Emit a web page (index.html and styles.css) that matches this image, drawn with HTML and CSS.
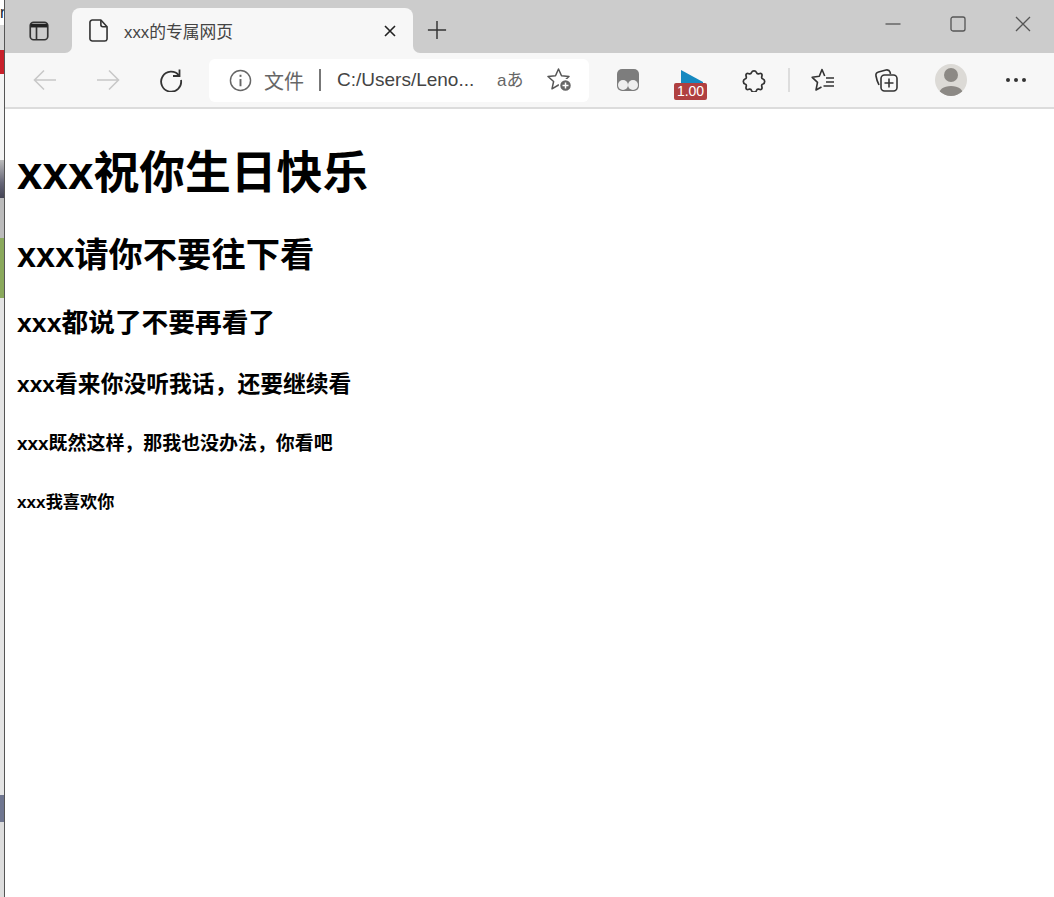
FILE: index.html
```html
<!DOCTYPE html>
<html lang="zh-CN">
<head>
  <meta charset="UTF-8">
  <title>xxx的专属网页</title>
  <link rel="stylesheet" href="styles.css">
</head>
<body>
  <div class="desktop">
    <!-- 后面窗口露出的一条 -->
    <div class="behind">
      <div class="behind-text">r</div>
      <div class="behind-gap1"></div>
      <div class="behind-red"></div>
      <div class="behind-gap2"></div>
      <div class="behind-dark"></div>
      <div class="behind-gap3"></div>
      <div class="behind-green"></div>
      <div class="behind-gap4"></div>
      <div class="behind-blue"></div>
      <div class="behind-gap5"></div>
    </div>

    <div class="window">
      <div class="tabbar">
        <div class="tabbar-left">
          <svg class="icon" viewBox="0 0 24 24" fill="none" stroke="#333" stroke-width="2">
            <rect x="1.500" y="1.500" width="21" height="21" rx="4"/>
            <path d="M2 5.500h20" stroke-width="4.500" stroke="#222"/>
            <path d="M9 7v15"/>
          </svg>
        </div>
        <div class="tab-wrap">
          <div class="tab">
            <svg class="icon tab-file" viewBox="0 0 20 24" fill="none" stroke="#333" stroke-width="1.700" stroke-linejoin="round">
              <path d="M4 1h8.500L19 8v13a2.500 2.500 0 0 1-2.500 2H4a2.500 2.500 0 0 1-3-2.500V3.500A2.500 2.500 0 0 1 4 1z"/>
              <path d="M12.500 1v5a2 2 0 0 0 2 2H19"/>
            </svg>
            <span class="tab-title">xxx的专属网页</span>
            <svg class="tab-close" viewBox="0 0 14 14" fill="none" stroke="#222" stroke-width="1.600">
              <path d="M2 2l10 10M12 2L2 12"/>
            </svg>
          </div>
        </div>
        <div class="tabbar-right">
          <svg class="new-tab" viewBox="0 0 22 22" fill="none" stroke="#333" stroke-width="1.600">
            <path d="M11 1v20M1 11h20"/>
          </svg>
          <div class="win-controls">
            <svg class="win-btn" viewBox="0 0 16 16" fill="none" stroke="#555" stroke-width="1.300"><path d="M0.500 8h15"/></svg>
            <svg class="win-btn" viewBox="0 0 16 16" fill="none" stroke="#555" stroke-width="1.300"><rect x="1" y="1" width="14" height="14" rx="2"/></svg>
            <svg class="win-btn" viewBox="0 0 16 16" fill="none" stroke="#555" stroke-width="1.300"><path d="M1 1l14 14M15 1L1 15"/></svg>
          </div>
        </div>
      </div>

      <div class="toolbar">
        <div class="btn">
          <svg class="icon" viewBox="0 0 24 24" fill="none" stroke="#c8c8c8" stroke-width="1.600"><path d="M23 12H1.500M11 2.500L1.500 12l9.500 9.500"/></svg>
        </div>
        <div class="btn">
          <svg class="icon" viewBox="0 0 24 24" fill="none" stroke="#c8c8c8" stroke-width="1.600"><path d="M1 12h21.500M13 2.500l9.500 9.500-9.500 9.500"/></svg>
        </div>
        <div class="btn">
          <svg class="icon" viewBox="0 0 24 24" fill="none" stroke="#333" stroke-width="1.800"><path d="M20 7.500A10 10 0 1 0 22 12"/><path d="M20.500 1.500V8H14"/></svg>
        </div>

        <div class="address">
          <svg class="addr-info" viewBox="0 0 24 24" fill="none" stroke="#666" stroke-width="1.500">
            <circle cx="12" cy="12" r="10.500"/>
            <path d="M12 10.500V18" stroke-width="2"/>
            <path d="M12 6v2.200" stroke-width="2"/>
          </svg>
          <span class="addr-label">文件</span>
          <span class="addr-sep"></span>
          <span class="addr-url">C:/Users/Leno...</span>
          <span class="addr-read">aあ</span>
          <svg class="addr-star" viewBox="0 0 26 26" fill="none" stroke="#555" stroke-width="1.500" stroke-linejoin="round">
            <path d="M11.500 2l3 6.800 7.500 .7-5.600 5 1.600 7.300-6.500-3.800-6.500 3.800 1.600-7.300L1 9.500l7.500-.7z"/>
            <circle cx="18.500" cy="18.500" r="6" fill="#666" stroke="#fff" stroke-width="1.500"/>
            <path d="M18.500 15.500v6M15.500 18.500h6" stroke="#fff" stroke-width="1.500"/>
          </svg>
        </div>

        <div class="btn btn-first">
          <svg class="icon" viewBox="0 0 24 24">
            <rect x="1" y="1" width="22" height="22" rx="5" fill="#7d7d7d"/>
            <circle cx="7" cy="17" r="5" fill="#eee"/>
            <circle cx="17" cy="17" r="5" fill="#eee"/>
          </svg>
        </div>
        <div class="btn btn-badge">
          <svg class="flag" viewBox="0 0 24 14"><path d="M2 0l22 12v2H2z" fill="#1589c0"/></svg>
          <span class="badge">1.00</span>
        </div>
        <div class="btn">
          <svg class="icon" viewBox="0 0 24 24" fill="none" stroke="#333" stroke-width="1.700" stroke-linejoin="round">
            <path d="M9.500 4.500a2.700 2.700 0 0 1 5 0c.3 1 1 1.500 2 1.300l1.500-.3a1.700 1.700 0 0 1 2 2l-.3 1.500c-.2 1 .3 1.700 1.300 2a2.700 2.700 0 0 1 0 5c-1 .3-1.500 1-1.300 2l.3 1.500a1.700 1.700 0 0 1-2 2l-1.500-.3c-1-.2-1.700.3-2 1.300a2.700 2.700 0 0 1-5 0c-.3-1-1-1.500-2-1.300l-1.500.3a1.700 1.700 0 0 1-2-2l.3-1.500c.2-1-.3-1.700-1.300-2a2.700 2.700 0 0 1 0-5c1-.3 1.500-1 1.300-2l-.3-1.500a1.700 1.700 0 0 1 2-2l1.500.3c1 .2 1.700-.3 2-1.300z"/>
          </svg>
        </div>
        <div class="divider"></div>
        <div class="btn">
          <svg class="icon" viewBox="0 0 24 24" fill="none" stroke="#333" stroke-width="1.600" stroke-linejoin="round">
            <path d="M13.700 8L11 1.500 8.300 8.300 1.200 9.300l5.300 5L5 22l5.500-3"/>
            <path d="M15 10h8M15 14h8M12.500 18H23" stroke-width="1.400"/>
          </svg>
        </div>
        <div class="btn">
          <svg class="icon" viewBox="0 0 24 24" fill="none" stroke="#333" stroke-width="1.600" stroke-linejoin="round">
            <path d="M5 17c-1-2-2.500-6-3-9-.4-2 .5-3.500 2.500-4L12 2c2-.3 3.500.5 4 2l.5 2"/>
            <rect x="7" y="7" width="16" height="16" rx="3.500"/>
            <path d="M15 10.500v9M10.500 15h9"/>
          </svg>
        </div>
        <div class="btn btn-profile">
          <div class="avatar">
            <svg viewBox="0 0 32 32"><circle cx="16" cy="11" r="7" fill="#8c8985"/><path d="M3.500 32c0-6.500 5-10 12.500-10S28.500 25.500 28.500 32z" fill="#8c8985"/></svg>
          </div>
        </div>
        <div class="btn btn-more">
          <span class="dot"></span><span class="dot"></span><span class="dot"></span>
        </div>
      </div>

      <div class="content">
        <h1>xxx祝你生日快乐</h1>
        <h2>xxx请你不要往下看</h2>
        <h3>xxx都说了不要再看了</h3>
        <h4>xxx看来你没听我话，还要继续看</h4>
        <h5>xxx既然这样，那我也没办法，你看吧</h5>
        <h6>xxx我喜欢你</h6>
      </div>
    </div>
  </div>
</body>
</html>
```

FILE: styles.css
```css
* {
  margin: 0;
  padding: 0;
  box-sizing: border-box;
  font-family: "Liberation Sans", "Noto Sans CJK SC", sans-serif;
}

html, body {
  height: 100%;
  overflow: hidden;
  background-color: #fff;
}

.desktop {
  display: flex;
  height: 897px;
}

/* left sliver */
.behind {
  width: 4px;
  display: flex;
  flex-direction: column;
  background-color: #e4e4e4;
}

.behind-text {
  height: 25px;
  font-size: 16px;
  line-height: 25px;
  color: #123;
  background-color: #fff;
}

.behind-gap1 { height: 25px; background-color: #d8d8d8; }
.behind-red { height: 24px; background-color: #c8202a; }
.behind-gap2 { height: 86px; background-color: #f4f4f4; }
.behind-dark { height: 38px; background: linear-gradient(#bbb, #667 60%, #445 100%); }
.behind-gap3 { height: 40px; background-color: #bbb; }
.behind-green { height: 60px; background-color: #8aa95c; }
.behind-gap4 { height: 497px; background-color: #e4e4e4; }
.behind-blue { height: 27px; background-color: #6f7690; }
.behind-gap5 { flex: 1; background-color: #ddd; }

.window {
  flex: 1;
  min-width: 0;
  display: flex;
  flex-direction: column;
  border-left: 1px solid #555;
  background-color: #fff;
}

.icon {
  width: 24px;
  height: 24px;
}

/* tab strip */
.tabbar {
  display: flex;
  height: 53px;
  background-color: #f7f7f7;
}

.tabbar-left {
  width: 67px;
  display: flex;
  align-items: center;
  justify-content: center;
  padding: 0 0 0 1px;
  background-color: #ccc;
  border-bottom-right-radius: 7px;
}

.tabbar-left .icon {
  width: 20px;
  height: 20px;
  margin-top: 9px;
}

.tab-wrap {
  width: 341px;
  padding-top: 8px;
  background-color: #ccc;
}

.tab {
  height: 45px;
  display: flex;
  align-items: center;
  padding: 0 16px 0 17px;
  background-color: #f7f7f7;
  border-radius: 8px 8px 0 0;
}

.tab-file {
  width: 19px;
  height: 23px;
}

.tab-title {
  flex: 1;
  margin-left: 16px;
  font-size: 16.800px;
  color: #444;
}

.tab-close {
  width: 14px;
  height: 14px;
}

.tabbar-right {
  flex: 1;
  display: flex;
  align-items: flex-start;
  background-color: #ccc;
  border-bottom-left-radius: 7px;
}

.new-tab {
  width: 20px;
  height: 20px;
  margin: 20px 0 0 14px;
}

.win-controls {
  margin-left: auto;
  display: flex;
  gap: 49px;
  padding: 16px 23px 0 0;
}

.win-btn {
  width: 16px;
  height: 16px;
}

/* toolbar */
.toolbar {
  height: 56px;
  display: flex;
  align-items: center;
  padding-left: 8px;
  background-color: #f7f7f7;
  border-bottom: 2px solid #dcdcdc;
}

.btn {
  width: 63px;
  flex-shrink: 0;
  display: flex;
  align-items: center;
  justify-content: center;
}

.btn-first {
  margin-left: 7px;
}

.btn-badge {
  flex-direction: column;
  height: 30px;
  margin-top: 10px;
}

.flag {
  width: 24px;
  height: 14px;
}

.badge {
  width: 33px;
  height: 17px;
  margin-top: -1px;
  font-size: 14px;
  line-height: 17px;
  text-align: center;
  color: #fff;
  background-color: #b04040;
  border-radius: 2px;
}

.divider {
  width: 2px;
  height: 24px;
  margin: 0 1px 0 3px;
  background-color: #ddd;
}

.btn-profile {
  margin-left: 2px;
}

.avatar {
  width: 32px;
  height: 32px;
  border-radius: 50%;
  overflow: hidden;
  background-color: #dcdad6;
}

.avatar svg {
  display: block;
  width: 32px;
  height: 32px;
}

.btn-more {
  gap: 4px;
  margin-left: 2px;
}

.dot {
  width: 4px;
  height: 4px;
  border-radius: 50%;
  background-color: #333;
}

/* address bar */
.address {
  width: 380px;
  height: 43px;
  margin-left: 7px;
  flex-shrink: 0;
  display: flex;
  align-items: center;
  padding-left: 20px;
  background-color: #fff;
  border-radius: 6px;
}

.addr-info {
  width: 23px;
  height: 23px;
}

.addr-label {
  margin-left: 12px;
  font-size: 20px;
  color: #666;
}

.addr-sep {
  width: 2px;
  height: 22px;
  margin: 0 16px 0 15px;
  background-color: #777;
}

.addr-url {
  width: 148px;
  font-size: 19px;
  color: #444;
  white-space: nowrap;
}

.addr-read {
  margin: -3px 0 0 12px;
  font-size: 17px;
  color: #666;
}

.addr-star {
  width: 26px;
  height: 26px;
  margin-left: 24px;
}

/* page content */
.content {
  flex: 1;
  padding-left: 12px;
  color: #000;
}

.content h1, .content h2, .content h3, .content h4, .content h5, .content h6 {
  font-weight: 700;
  line-height: 1.2;
}

.content h1 { font-size: 45.800px; margin-top: 38px; }
.content h2 { font-size: 34.300px; margin-top: 33px; }
.content h3 { font-size: 26.700px; margin-top: 31px; }
.content h4 { font-size: 22.800px; margin-top: 32px; }
.content h5 { font-size: 18.950px; margin-top: 35px; }
.content h6 { font-size: 17.200px; margin-top: 36px; }
```
